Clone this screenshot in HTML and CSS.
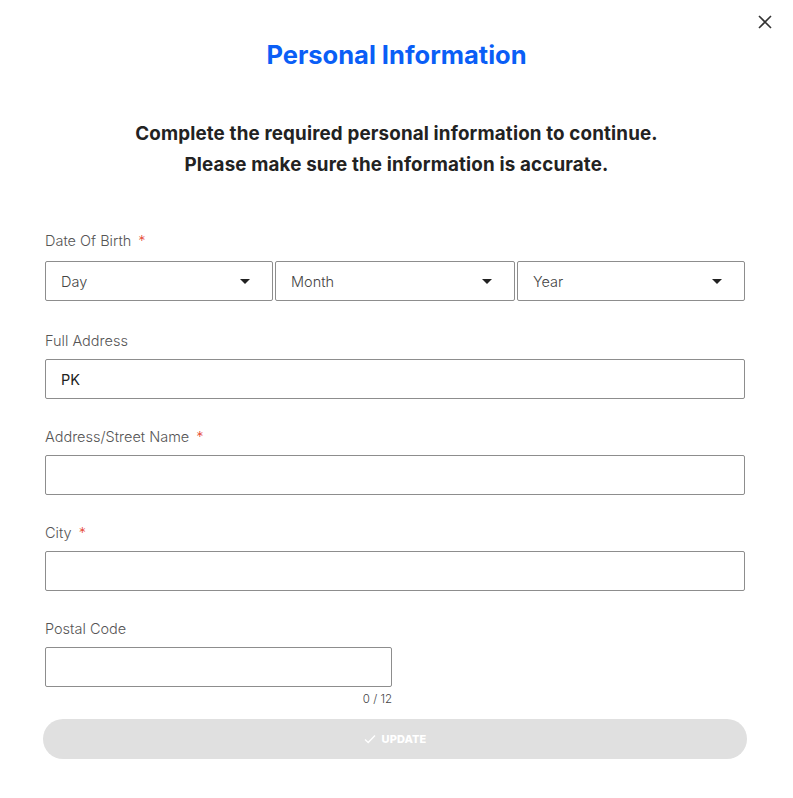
FILE: index.html
```html
<!DOCTYPE html>
<html>
<head>
<meta charset="utf-8">
<link rel="stylesheet" href="styles.css">
</head>
<body>
<div class="modal">
  <button class="close" aria-label="Close">
    <svg width="14" height="14" viewBox="0 0 14 14"><path d="M1 1L13 13M13 1L1 13" stroke="#333" stroke-width="1.6" fill="none"/></svg>
  </button>
  <h1 class="title">Personal Information</h1>
  <p class="subtitle">Complete the required personal information to continue.<br>Please make sure the information is accurate.</p>
  <form class="form">
    <div class="field dobfield">
      <div class="label">Date Of Birth <span class="req">*</span></div>
      <div class="dob">
        <div class="select"><span>Day</span><span class="caret"></span></div>
        <div class="select"><span>Month</span><span class="caret"></span></div>
        <div class="select"><span>Year</span><span class="caret"></span></div>
      </div>
    </div>
    <div class="field">
      <div class="label">Full Address</div>
      <div class="input">PK</div>
    </div>
    <div class="field">
      <div class="label">Address/Street Name <span class="req">*</span></div>
      <div class="input"></div>
    </div>
    <div class="field">
      <div class="label">City <span class="req">*</span></div>
      <div class="input"></div>
    </div>
    <div class="field postal">
      <div class="label">Postal Code</div>
      <div class="input"></div>
      <div class="counter">0 / 12</div>
    </div>
    <div class="btn">
      <svg width="12" height="10" viewBox="0 0 12 10"><path d="M1 5.5L4.2 8.5L11 1.5" stroke="#fff" stroke-width="1.3" fill="none"/></svg>
      <span>UPDATE</span>
    </div>
  </form>
</div>
</body>
</html>
```
FILE: styles.css
```css
* { box-sizing: border-box; }
html, body { margin: 0; padding: 0; background: #fff; }
body { font-family: "Inter", "Open Sans", sans-serif; }
.modal {
  position: relative;
  width: 793px;
  height: 798px;
  padding-top: 39px;
}
.close {
  position: absolute;
  top: 15px;
  right: 21px;
  width: 14px;
  height: 14px;
  padding: 0;
  border: 0;
  background: none;
}
.close svg { display: block; }
.title {
  margin: 0;
  text-align: center;
  color: #0a5ef6;
  font-size: 25.5px;
  font-weight: 700;
  line-height: 31px;
}
.subtitle {
  margin: 48px 0 0;
  text-align: center;
  color: #222;
  font-size: 18.8px;
  font-weight: 700;
  line-height: 31px;
  letter-spacing: 0.15px;
}
.form {
  width: 700px;
  margin: 51px 0 0 45px;
  display: flex;
  flex-direction: column;
}
.field {
  display: flex;
  flex-direction: column;
  margin-bottom: 28px;
}
.dobfield { margin-bottom: 30px; }
.label {
  font-size: 14.5px;
  color: #555;
  font-weight: 300;
  line-height: 20px;
  height: 20px;
  margin-bottom: 8px;
}
.dobfield .label { margin-bottom: 10px; }
.req { color: #e4412b; margin-left: 3px; }
.dob {
  display: grid;
  grid-template-columns: 228px 240px 228px;
  gap: 2px;
}
.select, .input {
  height: 40px;
  border: 1px solid #8d8d8d;
  border-radius: 2px;
  display: flex;
  align-items: center;
  padding: 0 15px;
  font-size: 14.5px;
  font-weight: 300;
  color: #444;
}
.select { justify-content: space-between; padding-right: 22px; }
.caret {
  width: 0; height: 0;
  border-left: 5px solid transparent;
  border-right: 5px solid transparent;
  border-top: 5px solid #222;
}
.input { color: #222; font-weight: 400; }
.postal { width: 347px; margin-bottom: 0; }
.counter {
  text-align: right;
  font-size: 11.5px;
  font-weight: 300;
  color: #444;
  line-height: 14px;
  margin-top: 5px;
}
.btn {
  margin: 13px -2px 0;
  height: 40px;
  border-radius: 20px;
  background: #e0e0e0;
  color: #fff;
  display: flex;
  align-items: center;
  justify-content: center;
  gap: 6px;
  font-size: 11px;
  font-weight: 800;
  letter-spacing: 0.1px;
}
```
